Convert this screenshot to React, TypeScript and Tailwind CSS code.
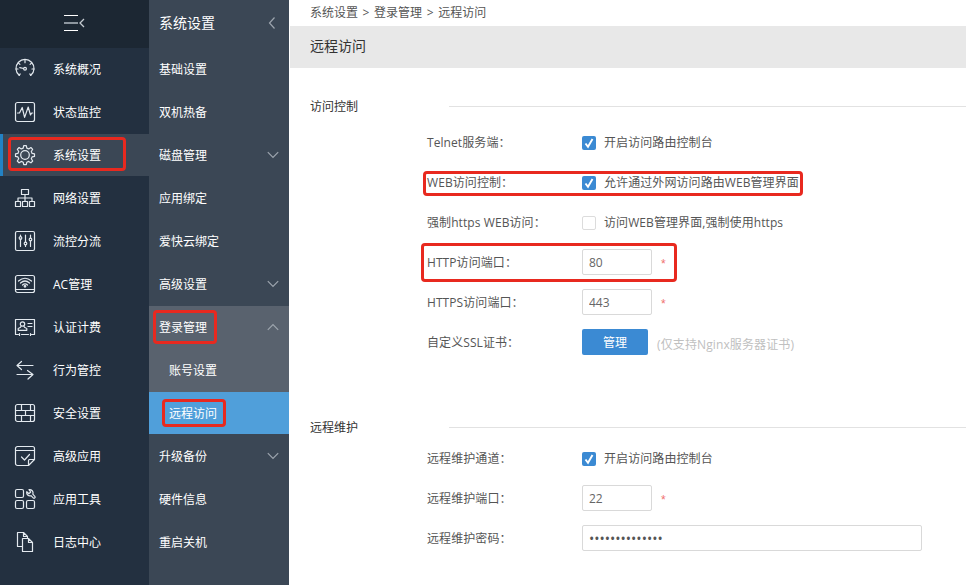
import React from 'react';

type IconProps = { children: React.ReactNode };

const Icon: React.FC<IconProps> = ({ children }) => (
  <svg
    width="22"
    height="22"
    viewBox="0 0 22 22"
    fill="none"
    stroke="#e3e9ef"
    strokeWidth="1.2"
    strokeLinecap="round"
    strokeLinejoin="round"
    className="shrink-0"
  >
    {children}
  </svg>
);

const mainMenu = [
  {
    label: '系统概况',
    icon: (
      <Icon>
        <path d="M5.2 17.3A9 9 0 1 1 16.8 17.3" />
        <path d="M11 1.9v2.8M4.3 4.8l1.6 1.6M17.7 4.8l-1.6 1.6M2 11h2M20 11h-2M5.2 17.3l1-1.4M16.8 17.3l-1-1.4M5.8 9.6l3.8.9" />
        <circle cx="11" cy="10.8" r="1.4" />
      </Icon>
    ),
  },
  {
    label: '状态监控',
    icon: (
      <Icon>
        <rect x="1.5" y="1.5" width="19" height="19" rx="2" />
        <path d="M3.5 12h2l2.7-5.500 2.400 9.900 3.600-10.400 2.300 8 1.200-2h1" />
      </Icon>
    ),
  },
  {
    label: '系统设置',
    active: true,
    icon: (
      <Icon>
        <circle cx="11" cy="11" r="4.3" />
        <path d="M9.700 1.600h2.600l.5 2.500 1.900.8 2.200-1.400 1.800 1.800-1.400 2.200.8 1.900 2.400.4v2.600l-2.400.5-.8 1.900 1.400 2.200-1.800 1.800-2.200-1.400-1.900.8-.5 2.400H9.700l-.5-2.400-1.900-.8-2.200 1.400L3.300 17l1.400-2.200-.8-1.900-2.400-.5V9.800l2.400-.4.8-1.900-1.400-2.200 1.800-1.800 2.200 1.400 1.900-.8z" />
      </Icon>
    ),
  },
  {
    label: '网络设置',
    icon: (
      <Icon>
        <path d="M7.5 2.5h7v5h-7zM1.5 14.5h5v5h-5zM8.5 14.5h5v5h-5zM15.5 14.5h5v5h-5zM11 7.5v7M4 14.5V11h14v3.5" />
      </Icon>
    ),
  },
  {
    label: '流控分流',
    icon: (
      <Icon>
        <rect x="1.5" y="1.5" width="19" height="19" rx="1.5" />
        <path d="M6.5 5v1.5M6.5 9v7.5M11.5 5v7M11.5 15v1.5M16.500 5v3M16.500 11v5.500" />
        <circle cx="6.5" cy="8" r="1.3" />
        <circle cx="11.5" cy="13.5" r="1.3" />
        <circle cx="16.500" cy="9.500" r="1.300" />
      </Icon>
    ),
  },
  {
    label: 'AC管理',
    icon: (
      <Icon>
        <rect x="1.5" y="2.5" width="19" height="17" rx="2" />
        <path d="M1.500 16.500h19M4.500 8q6.500-5.500 13 0M6.500 10q4.500-4 9 0M8.500 12q2.500-2.300 5 0" />
        <circle cx="11" cy="13.300" r=".8" fill="#e3e9ef" />
      </Icon>
    ),
  },
  {
    label: '认证计费',
    icon: (
      <Icon>
        <path d="M4.5 18.5h-3v-15h19v15h-3M7.5 18.5h7M5.5 17.5v2M16.5 17.5v2M14 7.500h4M14 10.500h4" />
        <circle cx="8.500" cy="8" r="2.200" />
        <path d="M7.200 10.200q-.2 1.300-3 2.300v1.800h8.600v-1.800q-2.800-1-3-2.300" />
      </Icon>
    ),
  },
  {
    label: '行为管控',
    icon: (
      <Icon>
        <path d="M19 6.500H3M7.500 2.500 3 6.500l4.500 4M3 15.500h16M13.500 11.500 19 15.500l-5 4.500" />
      </Icon>
    ),
  },
  {
    label: '安全设置',
    icon: (
      <Icon>
        <rect x="1.5" y="2.5" width="19" height="17" rx="2" />
        <path d="M1.5 8.500h19M1.5 13.500h19M7.500 2.500v6M16.500 2.500v6M11.500 8.500v5M7.500 13.500v6M16.500 13.500v6" />
      </Icon>
    ),
  },
  {
    label: '高级应用',
    icon: (
      <Icon>
        <path d="M14.500 20.500H3.500a2 2 0 0 1-2-2v-15a2 2 0 0 1 2-2h15a2 2 0 0 1 2 2v11zM14.500 20.500v-5a1 1 0 0 1 1-1h5M1.500 5.500h19M7.500 12l3 3 5-5.500" />
      </Icon>
    ),
  },
  {
    label: '应用工具',
    icon: (
      <Icon>
        <rect x="1.5" y="1.5" width="8" height="8" rx="1.5" />
        <rect x="1.5" y="12.5" width="8" height="8" rx="1.5" />
        <rect x="12.5" y="12.5" width="8" height="8" rx="1.5" />
        <path d="M15 1.700a3.300 3.300 0 0 1 3.800 4.400l2 2.200a1.100 1.100 0 0 1-1.600 1.600l-2.200-2.200a3.300 3.300 0 0 1-4.200-4l2.100 2 1.800-1.700z" />
      </Icon>
    ),
  },
  {
    label: '日志中心',
    icon: (
      <Icon>
        <path d="M8 15.500H3.500v-14h6l4 4V7M9.500 1.500v4h4M8.500 7.500h6l4 4v9h-10zM14.500 7.500v4h4" />
      </Icon>
    ),
  },
];

const subMenu: { label: string; arrow?: boolean }[] = [
  { label: '基础设置' },
  { label: '双机热备' },
  { label: '磁盘管理', arrow: true },
  { label: '应用绑定' },
  { label: '爱快云绑定' },
  { label: '高级设置', arrow: true },
];

const Chevron: React.FC<{ className?: string }> = ({ className = '' }) => (
  <svg width="12" height="8" viewBox="0 0 12 8" fill="none" stroke="#9da5ae" strokeWidth="1.2" className={className}>
    <path d="M.8 1.2 6 6.5l5.2-5.3" />
  </svg>
);

const SubItem: React.FC<{ label: string; arrow?: boolean }> = ({ label, arrow }) => (
  <li className="h-[43px] px-[10px] flex items-center justify-between">
    <span>{label}</span>
    {arrow && <Chevron className="mb-px" />}
  </li>
);

// Red frame drawn over an element
const Mark: React.FC<{ className: string }> = ({ className }) => (
  <span className={`absolute border-3 border-[#e8291f] rounded-[4px] pointer-events-none ${className}`} />
);

const Section: React.FC<{ title: string; className: string; children: React.ReactNode }> = ({ title, className, children }) => (
  <section className={className}>
    <div className="flex items-center h-5">
      <h2 className="w-[139px] pt-[2px] text-[#333]">{title}</h2>
      <div className="flex-1 h-px bg-[#e2e2e2]"></div>
    </div>
    {children}
  </section>
);

const Row: React.FC<{ label: string; children: React.ReactNode }> = ({ label, children }) => (
  <div className="relative h-10 ml-[117px] flex items-center">
    <label className="w-[155px] shrink-0 pt-[2px] tracking-[0.08px]">{label}</label>
    {children}
  </div>
);

const Check: React.FC<{ checked?: boolean; text: string }> = ({ checked, text }) => (
  <div className="flex items-center gap-2 pt-[2px]">
    {checked ? (
      <span className="w-[14px] h-[14px] rounded-[2px] bg-[#3b8ad3] flex items-center justify-center">
        <svg width="14" height="14" viewBox="0 0 14 14" fill="none" stroke="#fff" strokeWidth="1.9">
          <path d="M3.5 7.5 6 10.8 10.5 3" />
        </svg>
      </span>
    ) : (
      <span className="w-[14px] h-[14px] rounded-[2px] border border-[#dcdcdc]"></span>
    )}
    <span className="tracking-[0.08px]">{text}</span>
  </div>
);

const Port: React.FC<{ value: string }> = ({ value }) => (
  <>
    <input
      defaultValue={value}
      className="w-[70px] h-[26px] px-[6px] border border-[#d9d9d9] rounded-[2px] text-[#666] outline-none"
    />
    <span className="ml-[9px] pt-[3px] text-[#f07070] font-['Liberation_Sans']">*</span>
  </>
);

const App: React.FC = () => {
  return (
    <div className="flex w-full h-[585px] overflow-hidden bg-white text-xs text-[#555] font-['Open_Sans','Noto_Sans_CJK_SC',sans-serif]">
      {/* Main navigation */}
      <nav className="w-[149px] shrink-0 bg-[#233040] text-white">
        <div className="h-12 bg-[#1c2733] flex items-center justify-center pl-px pb-[2px]">
          <svg width="22" height="18" viewBox="0 0 22 18" fill="none" stroke="#fff">
            <path d="M0 1.5h14M0 16.5h14" />
            <path d="M0 9h14" stroke="#8d969f" strokeWidth="2" />
            <path d="M20 5l-4 4 4 4" stroke="#c5cbd1" strokeWidth="1.3" />
          </svg>
        </div>
        <ul>
          {mainMenu.map((item) => (
            <li
              key={item.label}
              className={`relative h-[42px] mb-px pl-[14px] flex items-center gap-[17px] ${item.active ? 'bg-[#3b4755]' : ''}`}
            >
              {item.active && <span className="absolute left-0 top-0 w-[3px] h-full bg-[#2382c4]"></span>}
              {item.icon}
              <span className="pt-[2px]">{item.label}</span>
              {item.active && <Mark className="left-2 top-[3px] w-[118px] h-[34px]" />}
            </li>
          ))}
        </ul>
      </nav>

      {/* Second level */}
      <nav className="w-[140px] shrink-0 bg-[#3b4755] text-white">
        <div className="h-12 pl-[10px] pr-[13px] pb-[2px] flex items-center justify-between text-sm">
          <span>系统设置</span>
          <svg width="8" height="12" viewBox="0 0 8 12" fill="none" stroke="#9da5ae" strokeWidth="1.2">
            <path d="M6.5 .5 1.5 6l5 5.5" />
          </svg>
        </div>
        <ul>
          {subMenu.map((item) => (
            <SubItem key={item.label} {...item} />
          ))}
          <li className="mb-px bg-[#59626e]">
            <div className="relative h-[43px] px-[10px] flex items-center justify-between">
              <span>登录管理</span>
              <Chevron className="rotate-180 mb-[2px]" />
              <Mark className="left-1 top-1 w-[64px] h-[34px]" />
            </div>
            <div className="h-[43px] pl-5 flex items-center">账号设置</div>
            <div className="relative h-[42px] pl-5 pt-[2px] flex items-center bg-[#509fda]">
              远程访问
              <Mark className="left-[13px] top-[7px] w-[64px] h-[28px]" />
            </div>
          </li>
          <SubItem label="升级备份" arrow />
          <SubItem label="硬件信息" />
          <SubItem label="重启关机" />
        </ul>
      </nav>

      {/* Content */}
      <main className="flex-1">
        <div className="h-[26px] pl-[21px] pb-px flex items-center [word-spacing:1.5px]">
          系统设置 &gt; 登录管理 &gt; 远程访问
        </div>
        <h1 className="h-[42px] ml-px pl-5 pb-[3px] flex items-center bg-[#e8e8e8] text-sm text-[#333]">远程访问</h1>
        <div className="pl-[22px]">
          <Section title="访问控制" className="-ml-px pt-7">
            <div className="h-[6px]"></div>
            <Row label="Telnet服务端：">
              <Check checked text="开启访问路由控制台" />
            </Row>
            <Row label="WEB访问控制：">
              <Check checked text="允许通过外网访问路由WEB管理界面" />
              <Mark className="-left-1 top-[9px] w-[380px] h-[25px]" />
            </Row>
            <Row label="强制https WEB访问：">
              <Check text="访问WEB管理界面,强制使用https" />
            </Row>
            <Row label="HTTP访问端口：">
              <Port value="80" />
              <Mark className="-left-[6px] top-[1px] w-[256px] h-[39px]" />
            </Row>
            <Row label="HTTPS访问端口：">
              <Port value="443" />
            </Row>
            <Row label="自定义SSL证书：">
              <button className="w-[66px] h-[26px] pt-px rounded-[2px] bg-[#3b8ad3] text-white">管理</button>
              <span className="ml-[9px] pt-[6px] text-[#c0c0c0] tracking-[0.12px]">(仅支持Nginx服务器证书)</span>
            </Row>
          </Section>
          <Section title="远程维护" className="-ml-px pt-[55px]">
            <div className="h-px"></div>
            <Row label="远程维护通道：">
              <Check checked text="开启访问路由控制台" />
            </Row>
            <Row label="远程维护端口：">
              <Port value="22" />
            </Row>
            <Row label="远程维护密码：">
              <input
                type="password"
                defaultValue="12345678901234"
                className="w-[340px] h-[26px] px-[6px] border border-[#d9d9d9] rounded-[2px] text-sm text-[#555] outline-none"
              />
            </Row>
          </Section>
        </div>
      </main>
    </div>
  );
};

export default App;
